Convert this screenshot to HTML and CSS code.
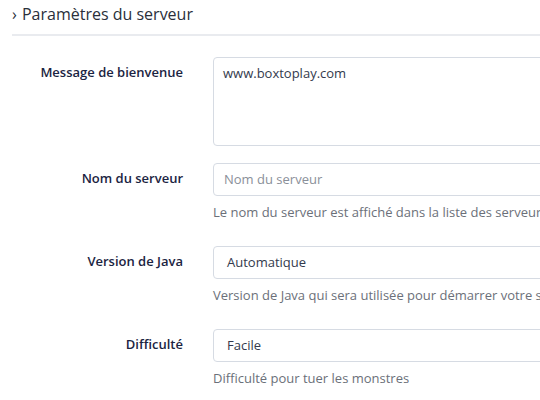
FILE: index.html
```html
<!DOCTYPE html>
<html lang="fr">
<head>
<meta charset="utf-8">
<title>Paramètres du serveur</title>
<link rel="stylesheet" href="styles.css">
</head>
<body>
<div class="panel">
  <h2 class="title"><span class="chev">›</span> Paramètres du serveur</h2>
  <form class="form">
    <div class="row row-area">
      <label class="label">Message de bienvenue</label>
      <div class="control">
        <div class="field area">www.boxtoplay.com</div>
      </div>
    </div>
    <div class="row">
      <label class="label">Nom du serveur</label>
      <div class="control">
        <div class="field input placeholder">Nom du serveur</div>
        <div class="help">Le nom du serveur est affiché dans la liste des serveurs de Minecraft</div>
      </div>
    </div>
    <div class="row">
      <label class="label">Version de Java</label>
      <div class="control">
        <div class="field select">Automatique</div>
        <div class="help">Version de Java qui sera utilisée pour démarrer votre serveur</div>
      </div>
    </div>
    <div class="row">
      <label class="label">Difficulté</label>
      <div class="control">
        <div class="field select">Facile</div>
        <div class="help">Difficulté pour tuer les monstres</div>
      </div>
    </div>
  </form>
</div>
</body>
</html>
```
FILE: styles.css
```css
* { box-sizing: border-box; }
html, body { margin: 0; padding: 0; background: #fff; overflow: hidden; }
body {
  font-family: "Open Sans", "Noto Sans", sans-serif;
  color: #333;
  width: 540px;
  height: 400px;
}
.panel {
  padding: 0 0 0 12px;
  width: 700px;
}
.title {
  margin: 0;
  padding-top: 2px;
  font-size: 16px;
  font-weight: 400;
  line-height: 24px;
  color: #2a2f3a;
  padding-bottom: 8px;
  border-bottom: 2px solid #e9ebef;
}
.chev { font-size: 16px; margin-right: 1px; }
.form { padding-top: 21px; }
.row {
  display: grid;
  grid-template-columns: 171px 430px;
  column-gap: 30px;
  margin-bottom: 17px;
}
.row-area { margin-bottom: 17px; }
.label {
  text-align: right;
  font-size: 13px;
  font-weight: 600;
  color: #1b2442;
  line-height: 18px;
  padding-top: 6px;
}
.field {
  border: 1px solid #d6dbe3;
  border-radius: 4px;
  font-size: 13px;
  color: #333a4d;
  background: #fff;
}
.area {
  height: 89px;
  padding: 6px 9px;
  line-height: 18px;
}
.input, .select {
  height: 33px;
  line-height: 31px;
  padding: 0 10px;
}
.select { padding-left: 13px; }
.placeholder { color: #8a8f99; }
.help {
  margin-top: 8px;
  margin-bottom: 8px;
  font-size: 13px;
  line-height: 17px;
  color: #6b7079;
  white-space: nowrap;
}
```
